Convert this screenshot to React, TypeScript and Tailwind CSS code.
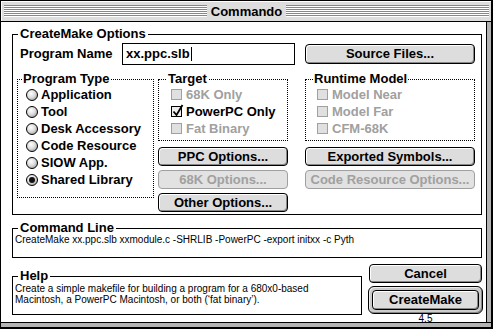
import React from "react";

type BtnProps = { label: string; disabled?: boolean; className?: string };

function Btn({ label, disabled, className = "" }: BtnProps) {
  return (
    <div
      className={`h-[19px] flex items-center justify-center rounded-[4px] border text-[13px] font-bold ${
        disabled
          ? "border-[#a0a0a0] text-[#a0a0a0] bg-[#e2e2e2]"
          : "border-black text-black bg-[#dddddd] shadow-[inset_1px_1px_0_#ffffff,inset_-1px_-1px_0_#888888]"
      } ${className}`}
    >
      {label}
    </div>
  );
}

function Radio({ label, on }: { label: string; on?: boolean }) {
  return (
    <div className="flex items-center h-[17px] gap-[3px]">
      <span className="flex items-center justify-center w-[12px] h-[12px] rounded-full border border-black bg-[radial-gradient(circle_at_40%_35%,#ffffff_0%,#dddddd_45%,#8a8a8a_100%)]">
        {on && <span className="w-[6px] h-[6px] rounded-full bg-[#111111]" />}
      </span>
      <span>{label}</span>
    </div>
  );
}

function Check({ label, on, disabled }: { label: string; on?: boolean; disabled?: boolean }) {
  return (
    <div className={`flex items-center h-[17px] gap-[4px] ${disabled ? "text-[#a0a0a0]" : "text-black"}`}>
      <span
        className={`relative w-[11px] h-[11px] border ${
          disabled ? "border-[#a0a0a0] bg-[#e0e0e0]" : "border-black bg-[#eeeeee]"
        }`}
      >
        {on && (
          <svg className="absolute left-[0px] top-[-3px]" width="12" height="13" viewBox="0 0 12 13">
            <path d="M1.5 7.5 L4.5 11 L10.5 1" stroke="black" strokeWidth="1.8" fill="none" />
          </svg>
        )}
      </span>
      <span>{label}</span>
    </div>
  );
}

function Legend({ text }: { text: string }) {
  return (
    <span className="absolute left-[5px] top-[-7px] bg-white px-[2px] leading-[11px] text-[13px] font-bold">
      {text}
    </span>
  );
}

export default function App() {
  return (
    <div className="w-[493px] h-[329px] bg-[#b4b4b4] border border-r-2 border-b-2 border-black flex flex-col font-['Liberation_Sans',Arial,sans-serif] text-black select-none">
      {/* title bar */}
      <div className="h-[21px] border-b border-black bg-[#dddddd] shadow-[inset_1px_1px_0_#ffffff] flex items-center pl-[3px] pr-[2px]">
        <div className="flex-1 h-[12px] bg-[repeating-linear-gradient(to_bottom,#888888_0px,#888888_1px,#ffffff_1px,#ffffff_2px)]" />
        <span className="px-[4px] text-[13px] font-bold leading-[15px]">Commando</span>
        <div className="flex-1 h-[12px] bg-[repeating-linear-gradient(to_bottom,#888888_0px,#888888_1px,#ffffff_1px,#ffffff_2px)]" />
      </div>

      <div className="flex-1 flex">
        <div className="w-[485px] h-[300px] bg-white pl-[11px] pt-[12px] text-[13px] font-bold">
          {/* CreateMake Options */}
          <div className="relative w-[470px] h-[181px] border border-black">
            <Legend text="CreateMake Options" />
            <div className="flex items-center mt-[8px] pl-[7px]">
              <span className="w-[102px]">Program Name</span>
              <div className="w-[173px] h-[22px] border border-black flex items-center pl-[3px]">
                <span>xx.ppc.slb</span>
                <span className="w-[1px] h-[14px] bg-black ml-[1px]" />
              </div>
              <Btn label="Source Files..." className="w-[170px] h-[20px] ml-[10px]" />
            </div>

            <div className="flex mt-[14px] pl-[4px]">
              {/* Program Type */}
              <div className="relative w-[137px] h-[119px] border border-dotted border-black pt-[6px] pl-[8px]">
                <span className="absolute left-[4px] top-[-9px] bg-white px-[1px] leading-[15px]">Program Type</span>
                <Radio label="Application" />
                <Radio label="Tool" />
                <Radio label="Desk Accessory" />
                <Radio label="Code Resource" />
                <Radio label="SIOW App." />
                <Radio label="Shared Library" on />
              </div>

              {/* Target + buttons */}
              <div className="w-[130px] ml-[4px] flex flex-col">
                <div className="relative h-[62px] border border-dotted border-black pt-[6px] pl-[12px]">
                  <span className="absolute left-[8px] top-[-9px] bg-white px-[1px] leading-[15px]">Target</span>
                  <Check label="68K Only" disabled />
                  <Check label="PowerPC Only" on />
                  <Check label="Fat Binary" disabled />
                </div>
                <Btn label="PPC Options..." className="mt-[6px]" />
                <Btn label="68K Options..." disabled className="mt-[4px]" />
                <Btn label="Other Options..." className="mt-[4px]" />
              </div>

              {/* Runtime Model + buttons */}
              <div className="w-[170px] ml-[17px] flex flex-col">
                <div className="relative h-[62px] border border-dotted border-black pt-[6px] pl-[11px]">
                  <span className="absolute left-[7px] top-[-9px] bg-white px-[1px] leading-[15px]">Runtime Model</span>
                  <Check label="Model Near" disabled />
                  <Check label="Model Far" disabled />
                  <Check label="CFM-68K" disabled />
                </div>
                <Btn label="Exported Symbols..." className="mt-[6px]" />
                <Btn label="Code Resource Options..." disabled className="mt-[4px]" />
              </div>
            </div>
          </div>

          {/* Command Line */}
          <div className="relative w-[470px] h-[30px] border border-black mt-[13px] pt-[5px] pl-[2px]">
            <Legend text="Command Line" />
            <p className="text-[10px] font-normal leading-[12px] whitespace-nowrap">
              CreateMake xx.ppc.slb xxmodule.c -SHRLIB -PowerPC -export initxx -c Pyth
            </p>
          </div>

          {/* Help + action buttons */}
          <div className="flex">
            <div className="relative w-[350px] h-[39px] border border-black mt-[18px] pt-[6px] pl-[2px]">
              <Legend text="Help" />
              <p className="text-[10px] font-normal leading-[11px]">
                Create a simple makefile for building a program for a 680x0-based
                <br />
                Macintosh, a PowerPC Macintosh, or both (‘fat binary’).
              </p>
            </div>
            <div className="w-[115px] ml-[6px] mt-[6px] flex flex-col">
              <Btn label="Cancel" className="mx-[1px]" />
              <div className="mt-[3px] h-[28px] rounded-[6px] border border-black bg-[#cccccc] shadow-[inset_1px_1px_0_#eeeeee,inset_-1px_-1px_0_#888888] p-[3px]">
                <Btn label="CreateMake" className="h-[20px]" />
              </div>
              <span className="text-center text-[10px] font-normal leading-[9px]">4.5</span>
            </div>
          </div>
        </div>
        <div className="flex-1 bg-[#b4b4b4] border-l border-black" />
      </div>
      <div className="h-[5px] bg-[#b4b4b4] border-t border-black" />
    </div>
  );
}
